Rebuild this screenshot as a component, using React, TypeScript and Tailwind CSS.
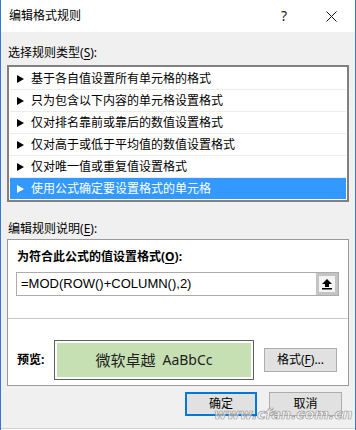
import React from 'react';

const RULE_TYPES = [
  '基于各自值设置所有单元格的格式',
  '只为包含以下内容的单元格设置格式',
  '仅对排名靠前或靠后的数值设置格式',
  '仅对高于或低于平均值的数值设置格式',
  '仅对唯一值或重复值设置格式',
  '使用公式确定要设置格式的单元格',
];

const SELECTED = 5;

function Tri({ white }: { white?: boolean }) {
  return (
    <svg width="7" height="8" viewBox="0 0 7 8" className="shrink-0">
      <polygon points="0,0 7,4 0,8" fill={white ? '#ffffff' : '#000000'} />
    </svg>
  );
}

function Key({ k }: { k: string }) {
  return (
    <>
      (<span className="underline underline-offset-2">{k}</span>)
    </>
  );
}

export default function App() {
  return (
    <div className="relative w-[356px] h-[430px] overflow-hidden border-x border-[#2e7bcf] bg-[#f0f0f0] font-['Noto_Sans','Noto_Sans_CJK_SC',sans-serif] text-[12px] leading-[16px] text-black">
      {/* title bar */}
      <div className="flex h-[32px] items-center bg-white pl-[8px]">
        <span className="flex-1">编辑格式规则</span>
        <span className="w-[10px] text-[14px] text-[#222]">?</span>
        <svg width="11" height="11" viewBox="0 0 11 11" className="ml-[35px] mr-[18px]">
          <path d="M0.5 0.5 L10.5 10.5 M10.5 0.5 L0.5 10.5" stroke="#111" strokeWidth="1" />
        </svg>
      </div>

      <div className="px-[6px]">
        <div className="pt-[13px] pl-[1px]">
          选择规则类型<Key k="S" />:
        </div>

        {/* rule type list */}
        <div className="mt-[4px] border-2 border-[#808080] bg-white p-[1px]">
          {RULE_TYPES.map((t, i) => {
            const sel = i === SELECTED;
            return (
              <div
                key={t}
                className={
                  sel
                    ? 'flex h-[21px] items-center gap-[7px] bg-[#3399ff] pl-[7px] text-white'
                    : 'flex h-[22px] items-center gap-[7px] border-b border-[#ececec] pl-[7px] pt-[1px]'
                }
              >
                <Tri white={sel} />
                <span>{t}</span>
              </div>
            );
          })}
        </div>

        <div className="mt-[19px] pl-[1px]">
          编辑规则说明<Key k="E" />:
        </div>

        {/* description box */}
        <div className="mt-[2px] border border-[#9a9a9a] bg-white">
          <div className="pl-[9px] pt-[9px] font-bold">
            为符合此公式的值设置格式<Key k="O" />:
          </div>
          <div className="ml-[8px] mr-[9px] mt-[7px] flex h-[24px] border border-[#ababab]">
            <div className="flex flex-1 items-center pl-[4px] font-['Liberation_Sans',sans-serif] text-[13px]">
              =MOD(ROW()+COLUMN(),2)
            </div>
            <div className="flex w-[22px] items-center justify-center bg-[#c4c4c4] p-[3px]">
              <div className="flex h-full w-full items-center justify-center bg-[#f4f4f4]">
                <svg width="10" height="11" viewBox="0 0 10 11">
                  <polygon points="5,0 10,5 7,5 7,8 3,8 3,5 0,5" fill="#000" />
                  <rect x="0" y="9" width="10" height="1.5" fill="#000" />
                </svg>
              </div>
            </div>
          </div>

          <div className="mt-[22px] h-px bg-[#c8c8c8]" />

          <div className="mt-[21px] flex items-center pb-[5px] pl-[9px]">
            <div className="w-[37px] font-bold">预览:</div>
            <div className="h-[40px] w-[200px] border border-[#5f5f5f] bg-white p-[2px]">
              <div className="flex h-full items-center justify-center gap-[7px] bg-[#c6e0b4] text-[15px] text-[#1e1e1e]">
                <span>微软卓越</span>
                <span className="font-['Noto_Sans',sans-serif] text-[14px]">AaBbCc</span>
              </div>
            </div>
            <div className="ml-[10px] flex h-[24px] w-[73px] items-center justify-center border border-[#adadad] bg-[#e1e1e1]">
              格式<Key k="F" />...
            </div>
          </div>
        </div>

        {/* dialog buttons */}
        <div className="mt-[6px] flex justify-end gap-[12px] pr-[7px]">
          <div className="flex h-[24px] w-[72px] items-center justify-center border-2 border-[#0078d7] bg-[#e1e1e1]">
            确定
          </div>
          <div className="flex h-[24px] w-[73px] items-center justify-center border border-[#adadad] bg-[#e1e1e1]">
            取消
          </div>
        </div>
      </div>

      {/* sheet edge below the dialog */}
      <div className="absolute bottom-0 left-0 right-0 h-[2px] border-t border-[#d0d0d0] bg-white" />

      {/* watermark */}
      <div className="absolute left-[213px] top-[406px] font-['DejaVu_Sans',sans-serif] text-[14px] leading-[16px] font-bold italic text-[#ffffff99] [-webkit-text-stroke:0.7px_#9a9a9a]">
        www.cfan.com.cn
      </div>
    </div>
  );
}
